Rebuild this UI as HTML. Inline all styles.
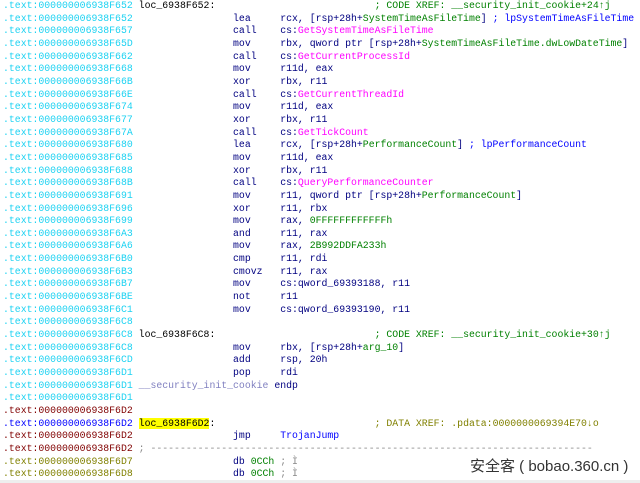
<!DOCTYPE html>
<html><head><meta charset="utf-8"><style>
html,body{margin:0;padding:0;background:#fff;width:640px;height:483px;overflow:hidden}
pre{margin:0;position:absolute;left:3px;top:0;font-family:"Liberation Mono",monospace;font-size:9.83px;line-height:12.65px;color:#000080;white-space:pre}
.a{color:#1cd2f2}.r{color:#800000}.o{color:#808000}.b{color:#0000ff}
.m{color:#ff00ff}.g{color:#008000}.k{color:#000080}.l{color:#000}.bl{color:#0000ff}
.lv{color:#8080c0}.gy{color:#888}.y{background:#ffff00}
.wm{position:absolute;left:470px;top:455px;font-family:"Liberation Sans","Noto Sans CJK SC",sans-serif;font-size:15px;color:#333}
.bt{position:absolute;left:0;top:480px;width:640px;height:3px;background:#eee}
</style></head><body>
<pre><span class="a">.text:000000006938F652</span> <span class="l">loc_6938F652:</span>                           <span class="g">; CODE XREF: __security_init_cookie+24↑j</span>
<span class="a">.text:000000006938F652</span>                 lea     rcx, [rsp+28h+<span class="g">SystemTimeAsFileTime</span>] <span class="bl">; lpSystemTimeAsFileTime</span>
<span class="a">.text:000000006938F657</span>                 call    cs:<span class="m">GetSystemTimeAsFileTime</span>
<span class="a">.text:000000006938F65D</span>                 mov     rbx, qword ptr [rsp+28h+<span class="g">SystemTimeAsFileTime.dwLowDateTime</span>]
<span class="a">.text:000000006938F662</span>                 call    cs:<span class="m">GetCurrentProcessId</span>
<span class="a">.text:000000006938F668</span>                 mov     r11d, eax
<span class="a">.text:000000006938F66B</span>                 xor     rbx, r11
<span class="a">.text:000000006938F66E</span>                 call    cs:<span class="m">GetCurrentThreadId</span>
<span class="a">.text:000000006938F674</span>                 mov     r11d, eax
<span class="a">.text:000000006938F677</span>                 xor     rbx, r11
<span class="a">.text:000000006938F67A</span>                 call    cs:<span class="m">GetTickCount</span>
<span class="a">.text:000000006938F680</span>                 lea     rcx, [rsp+28h+<span class="g">PerformanceCount</span>] <span class="bl">; lpPerformanceCount</span>
<span class="a">.text:000000006938F685</span>                 mov     r11d, eax
<span class="a">.text:000000006938F688</span>                 xor     rbx, r11
<span class="a">.text:000000006938F68B</span>                 call    cs:<span class="m">QueryPerformanceCounter</span>
<span class="a">.text:000000006938F691</span>                 mov     r11, qword ptr [rsp+28h+<span class="g">PerformanceCount</span>]
<span class="a">.text:000000006938F696</span>                 xor     r11, rbx
<span class="a">.text:000000006938F699</span>                 mov     rax, <span class="g">0FFFFFFFFFFFFh</span>
<span class="a">.text:000000006938F6A3</span>                 and     r11, rax
<span class="a">.text:000000006938F6A6</span>                 mov     rax, <span class="g">2B992DDFA233h</span>
<span class="a">.text:000000006938F6B0</span>                 cmp     r11, rdi
<span class="a">.text:000000006938F6B3</span>                 cmovz   r11, rax
<span class="a">.text:000000006938F6B7</span>                 mov     cs:qword_69393188, r11
<span class="a">.text:000000006938F6BE</span>                 not     r11
<span class="a">.text:000000006938F6C1</span>                 mov     cs:qword_69393190, r11
<span class="a">.text:000000006938F6C8</span>
<span class="a">.text:000000006938F6C8</span> <span class="l">loc_6938F6C8:</span>                           <span class="g">; CODE XREF: __security_init_cookie+30↑j</span>
<span class="a">.text:000000006938F6C8</span>                 mov     rbx, [rsp+28h+<span class="g">arg_10</span>]
<span class="a">.text:000000006938F6CD</span>                 add     rsp, 20h
<span class="a">.text:000000006938F6D1</span>                 pop     rdi
<span class="a">.text:000000006938F6D1</span> <span class="lv">__security_init_cookie</span> endp
<span class="a">.text:000000006938F6D1</span>
<span class="r">.text:000000006938F6D2</span>
<span class="b">.text:000000006938F6D2</span> <span class="l y">loc_6938F6D2</span><span class="l">:</span>                           <span class="o">; DATA XREF: .pdata:0000000069394E70↓o</span>
<span class="r">.text:000000006938F6D2</span>                 jmp     <span class="bl">TrojanJump</span>
<span class="r">.text:000000006938F6D2</span> <span class="gy">; ---------------------------------------------------------------------------</span>
<span class="o">.text:000000006938F6D7</span>                 db <span class="g">0CCh</span> <span class="gy">; Ì</span>
<span class="o">.text:000000006938F6D8</span>                 db <span class="g">0CCh</span> <span class="gy">; Ì</span></pre>
<div class="wm">安全客 ( bobao.360.cn )</div>
<div class="bt"></div>
</body></html>
